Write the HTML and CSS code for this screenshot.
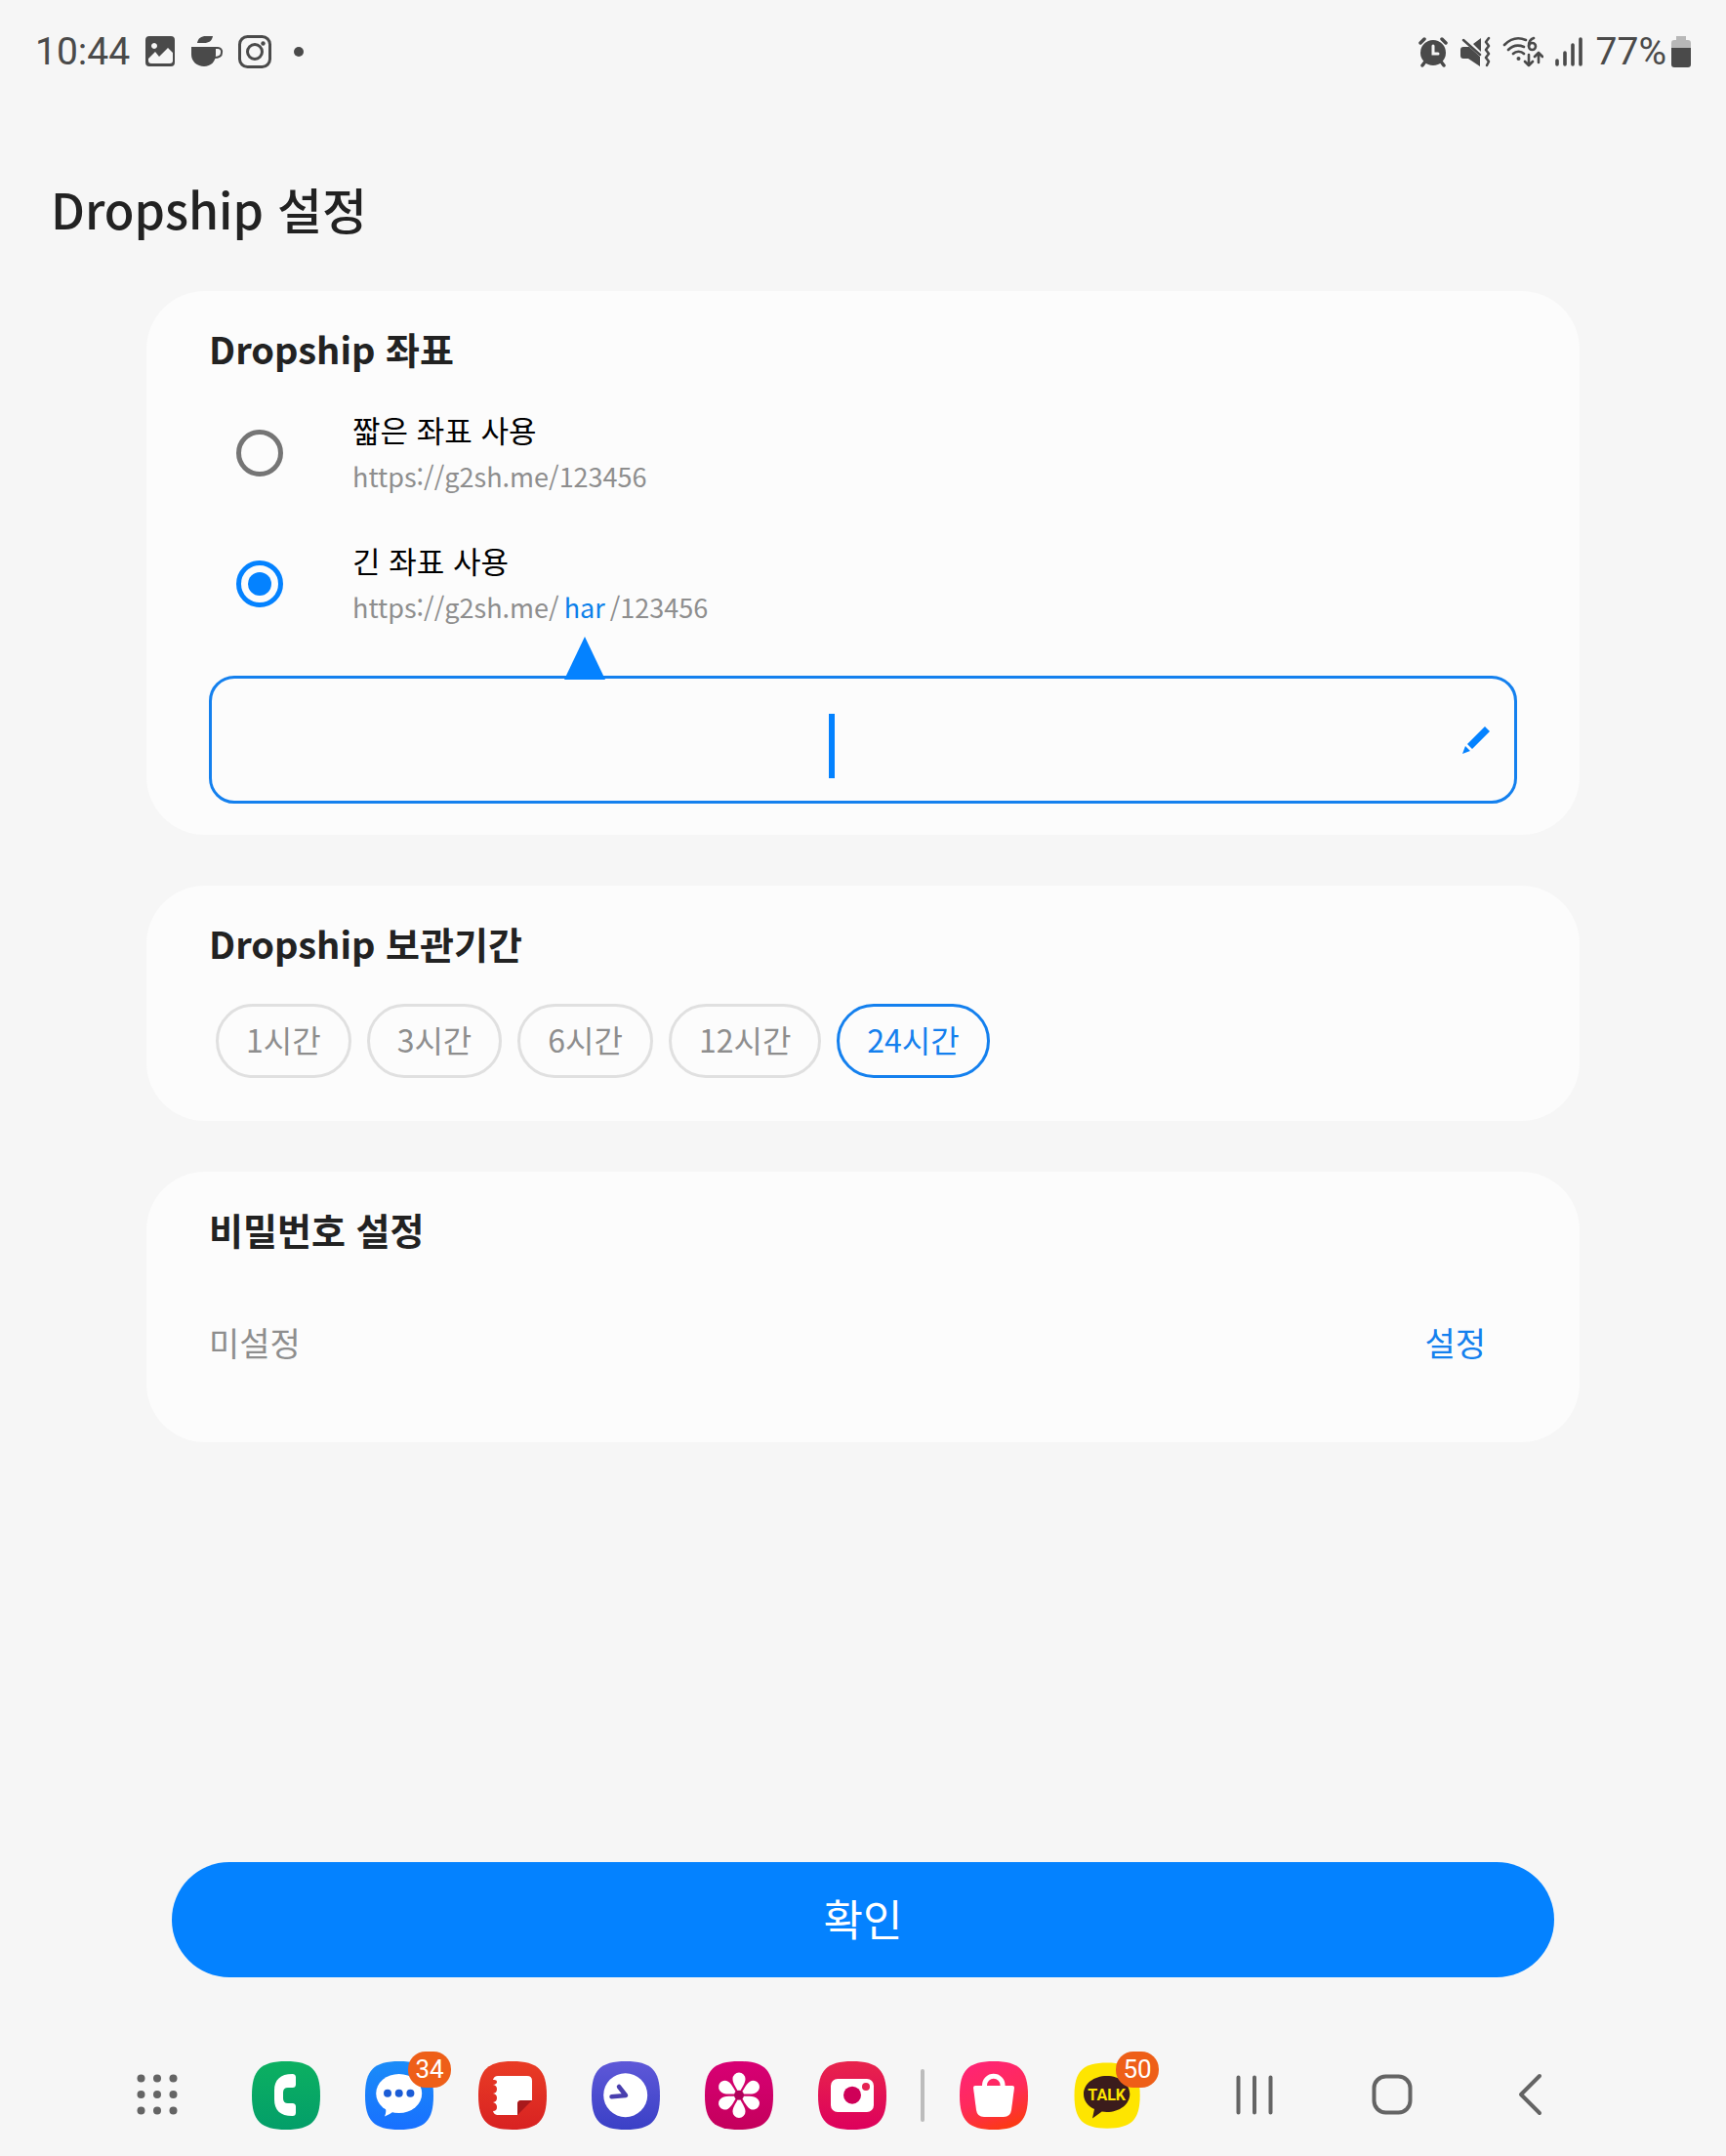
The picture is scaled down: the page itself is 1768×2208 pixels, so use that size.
FILE: index.html
```html
<!DOCTYPE html>
<html lang="ko">
<head>
<meta charset="utf-8">
<meta name="viewport" content="width=device-width, initial-scale=1">
<title>Dropship 설정</title>
<link rel="stylesheet" href="styles.css">
</head>
<body>
<div class="screen">
  <div class="status">
    <div class="status-left">
      <span class="status-time">10:44</span>
      <svg width="32" height="34" viewBox="0 0 32 34"><path fill="#4a4a4a" fill-rule="evenodd" d="M5 1h22q4 0 4 4v23q0 4-4 4H5q-4 0-4-4V5q0-4 4-4zM10 8a3 3 0 1 0 .01 0zM4 24l7-7 4 5 9-9 5 5v8q0 3-3 3H7q-3 0-3-3z"/></svg>
      <svg width="34" height="34" viewBox="0 0 34 34"><path fill="#4a4a4a" d="M7 8c1-5 4-7 9-7h7c-1 5-4 7-9 7zM1 12h25v8c0 7-5 12-12 12S1 27 1 20z"/><path fill="none" stroke="#4a4a4a" stroke-width="2" d="M25 13h3a4 4 0 0 1 4 5c0 4-3 5-8 5"/></svg>
      <svg width="34" height="34" viewBox="0 0 34 34"><g fill="none" stroke="#4a4a4a" stroke-width="3"><rect x="1.500" y="1.500" width="31" height="31" rx="8"/><circle cx="17" cy="17" r="7.500"/></g><circle cx="25.500" cy="8.500" r="2.200" fill="#4a4a4a"/></svg>
      <svg class="status-dot" width="12" height="34" viewBox="0 0 12 34"><circle cx="6" cy="17" r="5" fill="#4a4a4a"/></svg>
    </div>
    <div class="status-right">
      <svg width="30" height="32" viewBox="0 0 30 32"><circle cx="15" cy="17" r="13" fill="#4a4a4a"/><g fill="none" stroke="#4a4a4a" stroke-width="3.500" stroke-linecap="round"><path d="M2 7l4-4M28 7l-4-4M7 26l-3 4M23 26l3 4"/><path stroke="#f6f6f6" stroke-width="3" d="M15 10v8h5"/></g></svg>
      <svg width="32" height="32" viewBox="0 0 32 32"><path fill="#4a4a4a" d="M1 14q0-3 3-3h6l11 10v10L9 23H4q-3 0-3-3zM14 8l8-6v14z"/><path fill="none" stroke="#4a4a4a" stroke-width="2.500" stroke-linecap="round" stroke-linejoin="round" d="M4 4l17 15M30 2l-3 4 3 4-3 4 3 4-3 4 3 4-2 4"/></svg>
      <svg width="42" height="32" viewBox="0 0 42 32"><g fill="none" stroke="#4a4a4a" stroke-width="2.600" stroke-linecap="round" stroke-linejoin="round"><path d="M2 9C9 2 17 1 24 4M6 14c5-5 11-5 16-3M11 18c3-3 8-3 11 0M32 2c-3 1-5 4-5 8"/><circle cx="30.500" cy="10.500" r="3.500"/><path d="M27 19v11M23 26l4 4 4-4M37 27V17M33 21l4-4 4 4"/></g><circle cx="16.500" cy="23" r="2" fill="#4a4a4a"/></svg>
      <svg width="30" height="32" viewBox="0 0 30 32"><path fill="none" stroke="#4a4a4a" stroke-width="3.600" stroke-linecap="round" d="M2 25v4M10 17v12M18 9v20M26 3v26"/></svg>
      <span class="status-percent">77%</span>
      <svg width="22" height="34" viewBox="0 0 22 34"><path fill="#b8b8b8" d="M6 1h10v4h2q3 0 3 3v6H1V8q0-3 3-3h2z"/><path fill="#4a4a4a" d="M1 13h20v17q0 3-3 3H4q-3 0-3-3z"/></svg>
    </div>
  </div>

  <h1 class="title">Dropship 설정</h1>

  <form class="settings">
    <section class="card card-address">
      <h2 class="heading">Dropship 좌표</h2>
      <div class="options">
        <div class="option">
          <input class="radio" type="radio" name="address" id="short">
          <label class="option-text" for="short">
            <span class="option-name">짧은 좌표 사용</span>
            <span class="option-url">https://g2sh.me/123456</span>
          </label>
        </div>
        <div class="option">
          <input class="radio" type="radio" name="address" id="long" checked>
          <label class="option-text" for="long">
            <span class="option-name">긴 좌표 사용</span>
            <span class="option-url">https://g2sh.me/<span class="slug">har<svg class="pointer" width="42" height="44" viewBox="0 0 42 44"><path fill="#0482ff" d="M21 0l21 44H0z"/></svg></span>/123456</span>
          </label>
        </div>
      </div>
      <div class="field">
        <div class="field-box">
          <input class="field-input" type="text" aria-label="긴 좌표">
          <span class="caret"></span>
        </div>
        <svg class="pencil" width="30" height="30" viewBox="0 0 30 30"><path fill="#0482ff" d="M24 1l5 5-18 18-5-5zM4 21l5 5-8 3z"/></svg>
      </div>
    </section>

    <section class="card card-period">
      <h2 class="heading">Dropship 보관기간</h2>
      <div class="chips">
        <label class="chip"><input class="chip-radio" type="radio" name="period">1시간</label>
        <label class="chip"><input class="chip-radio" type="radio" name="period">3시간</label>
        <label class="chip"><input class="chip-radio" type="radio" name="period">6시간</label>
        <label class="chip"><input class="chip-radio" type="radio" name="period">12시간</label>
        <label class="chip"><input class="chip-radio" type="radio" name="period" checked>24시간</label>
      </div>
    </section>

    <section class="card card-password">
      <h2 class="heading">비밀번호 설정</h2>
      <div class="password-row">
        <span class="password-state">미설정</span>
        <button class="password-set" type="button">설정</button>
      </div>
    </section>

    <button class="confirm" type="button">확인</button>
  </form>

  <nav class="taskbar">
    <button class="tile launcher" type="button" aria-label="앱"><svg width="70" height="70" viewBox="0 0 70 70"><g fill="#646464"><circle cx="18.500" cy="17.500" r="4"/><circle cx="35" cy="17.500" r="4"/><circle cx="51.500" cy="17.500" r="4"/><circle cx="18.500" cy="34" r="4"/><circle cx="35" cy="34" r="4"/><circle cx="51.500" cy="34" r="4"/><circle cx="18.500" cy="50.500" r="4"/><circle cx="35" cy="50.500" r="4"/><circle cx="51.500" cy="50.500" r="4"/></g></svg></button>
    <div class="apps">
      <button class="tile" type="button" aria-label="전화"><svg width="70" height="70" viewBox="0 0 70 70"><defs><path id="squircle" d="M35 0C61 0 70 9 70 35S61 70 35 70 0 61 0 35 9 0 35 0z"/><linearGradient id="green" x2="0" y2="1"><stop stop-color="#0cb061"/><stop offset="1" stop-color="#039e69"/></linearGradient></defs><use href="#squircle" fill="url(#green)"/><path fill="#fff" d="M41.500 13q3.500 0 3.500 3.500v7q0 3.500-3.500 3.500H37q-5 0-5 5v6q0 5 5 5h4.500q3.500 0 3.500 3.500v6q0 3.500-3.500 3.500C29 56 23 50 23 39v-9c0-11 6-17 18.500-17z"/></svg></button>
      <button class="tile" type="button" aria-label="메시지"><svg width="70" height="70" viewBox="0 0 70 70"><defs><linearGradient id="blue" x2="0" y2="1"><stop stop-color="#1a8cf8"/><stop offset="1" stop-color="#1870ff"/></linearGradient></defs><use href="#squircle" fill="url(#blue)"/><ellipse cx="34.700" cy="33" rx="23.500" ry="20" fill="#fff"/><path fill="#fff" d="M21 46q1 6-1 10.500 5-2 9-5z"/><g fill="#1b5cd6"><circle cx="23" cy="32.700" r="4"/><circle cx="34.700" cy="32.700" r="4"/><circle cx="46.400" cy="32.700" r="4"/></g></svg><span class="badge">34</span></button>
      <button class="tile" type="button" aria-label="노트"><svg width="70" height="70" viewBox="0 0 70 70"><defs><linearGradient id="red" x2="0" y2="1"><stop stop-color="#e93c25"/><stop offset="1" stop-color="#d82222"/></linearGradient></defs><use href="#squircle" fill="url(#red)"/><path fill="#fff" d="M20 15h30q5 0 5 5v20H44q-4 0-4 4v11H20q-4 0-5-4 4 0 4-4t-4-5q4-.5 4-4.500T15 33q4-.5 4-4.500T15 24q4-.5 4-3t-4-2q1-4 5-4z"/><path fill="#a8191c" d="M40 55V44q0-4 4-4h11z"/></svg></button>
      <button class="tile" type="button" aria-label="시계"><svg width="70" height="70" viewBox="0 0 70 70"><defs><linearGradient id="violet" x2="0" y2="1"><stop stop-color="#5e58d8"/><stop offset="1" stop-color="#3a40c6"/></linearGradient></defs><use href="#squircle" fill="url(#violet)"/><circle cx="34.700" cy="34.700" r="22.500" fill="#fff"/><path fill="none" stroke="#493fae" stroke-width="4.500" stroke-linecap="round" stroke-linejoin="round" d="M28 26l7 9-14.500 1.300"/></svg></button>
      <button class="tile" type="button" aria-label="갤러리"><svg width="70" height="70" viewBox="0 0 70 70"><defs><linearGradient id="magenta" x2="0" y2="1"><stop stop-color="#d80074"/><stop offset="1" stop-color="#c4005c"/></linearGradient><path id="petal" d="M35 33c-2-5-6.500-10-6.500-15a6.300 6.300 0 0 1 13 0c0 5-4.500 10-6.500 15z"/></defs><use href="#squircle" fill="url(#magenta)"/><g fill="#fff"><use href="#petal"/><use href="#petal" transform="rotate(60 35 34.700)"/><use href="#petal" transform="rotate(120 35 34.700)"/><use href="#petal" transform="rotate(180 35 34.700)"/><use href="#petal" transform="rotate(240 35 34.700)"/><use href="#petal" transform="rotate(300 35 34.700)"/></g><circle cx="35" cy="34.700" r="5" fill="#b0005a"/></svg></button>
      <button class="tile" type="button" aria-label="카메라"><svg width="70" height="70" viewBox="0 0 70 70"><defs><linearGradient id="rose" x2="0" y2="1"><stop stop-color="#e8244c"/><stop offset="1" stop-color="#dd005c"/></linearGradient></defs><use href="#squircle" fill="url(#rose)"/><rect x="13" y="18" width="44" height="34" rx="7" fill="#fff"/><circle cx="35" cy="34.700" r="9" fill="#cf0058"/><circle cx="49" cy="26" r="4" fill="#e52352"/></svg></button>
    </div>
    <span class="divider"></span>
    <div class="apps">
      <button class="tile" type="button" aria-label="스토어"><svg width="70" height="70" viewBox="0 0 70 70"><defs><linearGradient id="sunset" x1=".3" x2=".7" y2="1"><stop stop-color="#ff2474"/><stop offset=".5" stop-color="#ff2a5c"/><stop offset="1" stop-color="#fb3a10"/></linearGradient></defs><use href="#squircle" fill="url(#sunset)"/><path fill="#fff" d="M14 27q0-2 2-2h38q2 0 2 2l-3 23q-1 7-8 7H25q-7 0-8-7z"/><path fill="none" stroke="#fff" stroke-width="5" d="M25.500 26v-1.500a9.300 9.300 0 0 1 18.600 0V26"/></svg></button>
      <button class="tile" type="button" aria-label="카카오톡"><svg width="70" height="70" viewBox="0 0 70 70"><use href="#squircle" fill="#fee500" transform="translate(1.500 1.500) scale(.96)"/><path fill="#3b1c1c" d="M34.700 15C48 15 58.300 23 58.300 33.500S48 52 34.700 52q-2.500 0-5-.4L20 58.500l2-9.500C15 46 11 40 11 33.500 11 23 21.500 15 34.700 15z"/><text class="talk" x="34.700" y="39.500" text-anchor="middle">TALK</text></svg><span class="badge">50</span></button>
    </div>
    <div class="system">
      <button class="tile" type="button" aria-label="최근 앱"><svg width="70" height="70" viewBox="0 0 70 70"><path fill="none" stroke="#646464" stroke-width="4" stroke-linecap="round" d="M18.500 16.500v36M35 16.500v36M51.500 16.500v36"/></svg></button>
      <button class="tile" type="button" aria-label="홈"><svg width="70" height="70" viewBox="0 0 70 70"><rect x="16.500" y="15.500" width="37" height="37" rx="12" fill="none" stroke="#646464" stroke-width="4"/></svg></button>
      <button class="tile" type="button" aria-label="뒤로"><svg width="70" height="70" viewBox="0 0 70 70"><path fill="none" stroke="#646464" stroke-width="4" stroke-linecap="round" stroke-linejoin="round" d="M45 15L26 34l19 19"/></svg></button>
    </div>
  </nav>
</div>
</body>
</html>
```
FILE: styles.css
```css
* {
  box-sizing: border-box;
}

body {
  margin: 0;
  background: #f6f6f6;
  color: #222;
  font-family: "Noto Sans CJK KR", sans-serif;
}

button {
  margin: 0;
  padding: 0;
  border: 0;
  background: none;
  font: inherit;
}

svg {
  display: block;
}

.screen {
  display: flex;
  flex-direction: column;
  min-height: 100vh;
}

.status {
  display: flex;
  justify-content: space-between;
  padding: 30px 35px 30px 36px;
  color: #4a4a4a;
  font-family: Roboto, sans-serif;
  font-size: 39px;
  line-height: 46px;
}

.status-left,
.status-right {
  display: flex;
  align-items: center;
}

.status-left {
  gap: 15px;
}

.status-dot {
  margin-left: 7px;
}

.status-right {
  gap: 12px;
}

.status-percent {
  margin-right: -8px;
}

.title {
  margin: 0;
  padding: 77px 52px 55px;
  font-size: 50px;
  font-weight: 500;
  line-height: 60px;
}

.settings {
  display: flex;
  flex: 1;
  flex-direction: column;
  gap: 52px;
  padding: 0 150px;
}

.card {
  padding: 35px 64px 0;
  border-radius: 60px;
  background: #fcfcfc;
}

.card-address {
  padding-bottom: 32px;
}

.card-period {
  padding-bottom: 44px;
}

.card-password {
  padding-bottom: 78px;
}

.heading {
  margin: 0;
  font-size: 38px;
  font-weight: 700;
  line-height: 48px;
}

.options {
  display: flex;
  flex-direction: column;
  gap: 38px;
  padding: 35px 28px 46px;
}

.option {
  display: flex;
  align-items: center;
  gap: 71px;
}

.radio {
  display: grid;
  place-content: center;
  width: 48px;
  height: 48px;
  margin: 0;
  border: 5px solid #757575;
  border-radius: 50%;
  appearance: none;
}

.radio:checked {
  border-color: #0482ff;
}

.radio:checked::before {
  width: 24px;
  height: 24px;
  border-radius: 50%;
  background: #0482ff;
  content: "";
}

.option-text {
  display: flex;
  flex-direction: column;
  line-height: 48px;
}

.option-name {
  color: #000;
  font-size: 31px;
}

.option-url {
  color: #8e8e8e;
  font-size: 27px;
}

.slug {
  display: inline-block;
  position: relative;
  margin: 0 5px;
  color: #0b80ea;
}

.pointer {
  position: absolute;
  top: 54px;
  left: 50%;
  transform: translateX(-50%);
}

.field {
  display: flex;
  align-items: center;
  height: 131px;
  border: 3px solid #1480ee;
  border-radius: 26px;
}

.field-box {
  position: relative;
  flex: 1;
  align-self: stretch;
}

.field-input {
  width: 100%;
  height: 100%;
  padding: 0;
  border: 0;
  outline: 0;
  background: none;
  font: inherit;
  font-size: 44px;
  text-align: center;
}

.caret {
  position: absolute;
  top: 36px;
  left: 50%;
  width: 6px;
  height: 66px;
  background: #0482ff;
}

.pencil {
  margin: 0 24px 0 16px;
}

.chips {
  display: flex;
  gap: 16px;
  padding: 38px 7px 0;
}

.chip {
  padding: 0 28px 4px;
  border: 3px solid #e0e0e0;
  border-radius: 38px;
  color: #8e8e8e;
  font-size: 32px;
  line-height: 66px;
}

.chip:has(:checked) {
  border-color: #1480ee;
  color: #1480ee;
}

.chip-radio {
  position: absolute;
  margin: 0;
  opacity: 0;
}

.password-row {
  display: flex;
  justify-content: space-between;
  padding: 68px 32px 0 0;
  font-size: 34px;
  line-height: 48px;
}

.password-state {
  color: #8e8e8e;
}

.password-set {
  color: #1480ee;
}

.confirm {
  height: 118px;
  margin: auto 26px 0;
  padding-bottom: 4px;
  border-radius: 59px;
  background: #0482ff;
  color: #fff;
  font-size: 44px;
}

.taskbar {
  display: flex;
  align-items: center;
  padding: 86px 166px 27px 126px;
}

.tile {
  position: relative;
  width: 70px;
  height: 70px;
}

.launcher {
  margin-right: 62px;
}

.apps {
  display: flex;
  gap: 46px;
}

.divider {
  width: 4px;
  height: 54px;
  margin: 0 36px 0 35px;
  border-radius: 2px;
  background: #bcbcbc;
}

.system {
  display: flex;
  gap: 71px;
  margin-left: auto;
}

.badge {
  position: absolute;
  top: -10px;
  left: 44px;
  width: 44px;
  border-radius: 18px;
  background: #ee5f18;
  color: #fff;
  font-family: Roboto, sans-serif;
  font-size: 26px;
  line-height: 37px;
  text-align: center;
}

.talk {
  fill: #fee500;
  font-family: Roboto, sans-serif;
  font-size: 16px;
  font-weight: 700;
}
```
